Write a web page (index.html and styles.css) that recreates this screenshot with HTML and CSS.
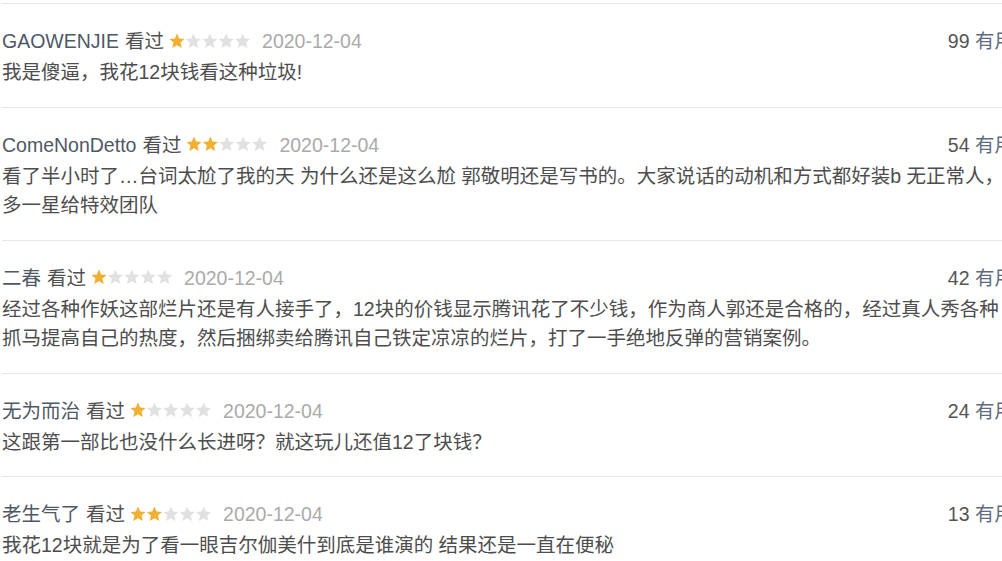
FILE: index.html
```html
<!DOCTYPE html>
<html lang="zh-CN">
<head>
<meta charset="utf-8">
<title>短评</title>
<link rel="stylesheet" href="styles.css">
</head>
<body>
<div class="viewport">
  <div class="comments">
    <div class="comment">
      <div class="info">
        <span class="user">GAOWENJIE</span>
        <span class="watched">看过</span>
        <svg class="stars" viewBox="0 0 82 16" width="82" height="16"><use href="#s1"/></svg>
        <span class="date">2020-12-04</span>
        <span class="votes"><span class="num">99</span> <span class="useful">有用</span></span>
      </div>
      <p class="text">我是傻逼，我花12块钱看这种垃圾!</p>
    </div>
    <div class="comment">
      <div class="info">
        <span class="user">ComeNonDetto</span>
        <span class="watched">看过</span>
        <svg class="stars" viewBox="0 0 82 16" width="82" height="16"><use href="#s2"/></svg>
        <span class="date">2020-12-04</span>
        <span class="votes"><span class="num">54</span> <span class="useful">有用</span></span>
      </div>
      <p class="text">看了半小时了…台词太尬了我的天 为什么还是这么尬 郭敬明还是写书的。大家说话的动机和方式都好装b 无正常人，多一星给特效团队</p>
    </div>
    <div class="comment">
      <div class="info">
        <span class="user">二春</span>
        <span class="watched">看过</span>
        <svg class="stars" viewBox="0 0 82 16" width="82" height="16"><use href="#s1"/></svg>
        <span class="date">2020-12-04</span>
        <span class="votes"><span class="num">42</span> <span class="useful">有用</span></span>
      </div>
      <p class="text">经过各种作妖这部烂片还是有人接手了，12块的价钱显示腾讯花了不少钱，作为商人郭还是合格的，经过真人秀各种抓马提高自己的热度，然后捆绑卖给腾讯自己铁定凉凉的烂片，打了一手绝地反弹的营销案例。</p>
    </div>
    <div class="comment">
      <div class="info">
        <span class="user">无为而治</span>
        <span class="watched">看过</span>
        <svg class="stars" viewBox="0 0 82 16" width="82" height="16"><use href="#s1"/></svg>
        <span class="date">2020-12-04</span>
        <span class="votes"><span class="num">24</span> <span class="useful">有用</span></span>
      </div>
      <p class="text">这跟第一部比也没什么长进呀？就这玩儿还值12了块钱？</p>
    </div>
    <div class="comment">
      <div class="info">
        <span class="user">老生气了</span>
        <span class="watched">看过</span>
        <svg class="stars" viewBox="0 0 82 16" width="82" height="16"><use href="#s2"/></svg>
        <span class="date">2020-12-04</span>
        <span class="votes"><span class="num">13</span> <span class="useful">有用</span></span>
      </div>
      <p class="text">我花12块就是为了看一眼吉尔伽美什到底是谁演的 结果还是一直在便秘</p>
    </div>
  </div>
</div>
<svg class="defs" width="0" height="0" aria-hidden="true">
  <defs>
    <polygon id="star" points="8,0.6 10.2,5.6 15.6,6.1 11.5,9.6 12.8,15 8,12.2 3.2,15 4.5,9.6 0.4,6.1 5.8,5.6"/>
    <g id="s1">
      <use href="#star" x="0" fill="#f0b033"/>
      <use href="#star" x="16.4" fill="#e1e1e1"/>
      <use href="#star" x="32.8" fill="#e1e1e1"/>
      <use href="#star" x="49.2" fill="#e1e1e1"/>
      <use href="#star" x="65.6" fill="#e1e1e1"/>
    </g>
    <g id="s2">
      <use href="#star" x="0" fill="#f0b033"/>
      <use href="#star" x="16.4" fill="#f0b033"/>
      <use href="#star" x="32.8" fill="#e1e1e1"/>
      <use href="#star" x="49.2" fill="#e1e1e1"/>
      <use href="#star" x="65.6" fill="#e1e1e1"/>
    </g>
  </defs>
</svg>
</body>
</html>
```

FILE: styles.css
```css
html, body {
  margin: 0;
  padding: 0;
  background: #ffffff;
  overflow: hidden;
}

.viewport {
  width: 1002px;
  height: 561px;
  overflow: hidden;
  padding-top: 3px;
  box-sizing: border-box;
}

.comments {
  width: 1012px;
  margin-left: 2px;
  font-family: "Liberation Sans", "Noto Sans CJK SC", sans-serif;
  font-size: 19.5px;
}

.comment {
  border-top: 1px solid #e6e6e6;
  padding: 22px 0 19px;
}

.info {
  display: flex;
  align-items: center;
  height: 30px;
  line-height: 30px;
  white-space: nowrap;
}

.user {
  color: #4f5866;
}

.watched {
  color: #505050;
  margin-left: 6px;
}

.stars {
  display: block;
  margin-left: 5px;
  margin-top: -1px;
}

.date {
  color: #aaaaaa;
  margin-left: 11px;
}

.votes {
  margin-left: auto;
  color: #555555;
}

.useful {
  color: #5d6b80;
}

.text {
  margin: 2px 0 0;
  line-height: 29.5px;
  color: #4d4d4d;
}

.defs {
  position: absolute;
  width: 0;
  height: 0;
}
```
